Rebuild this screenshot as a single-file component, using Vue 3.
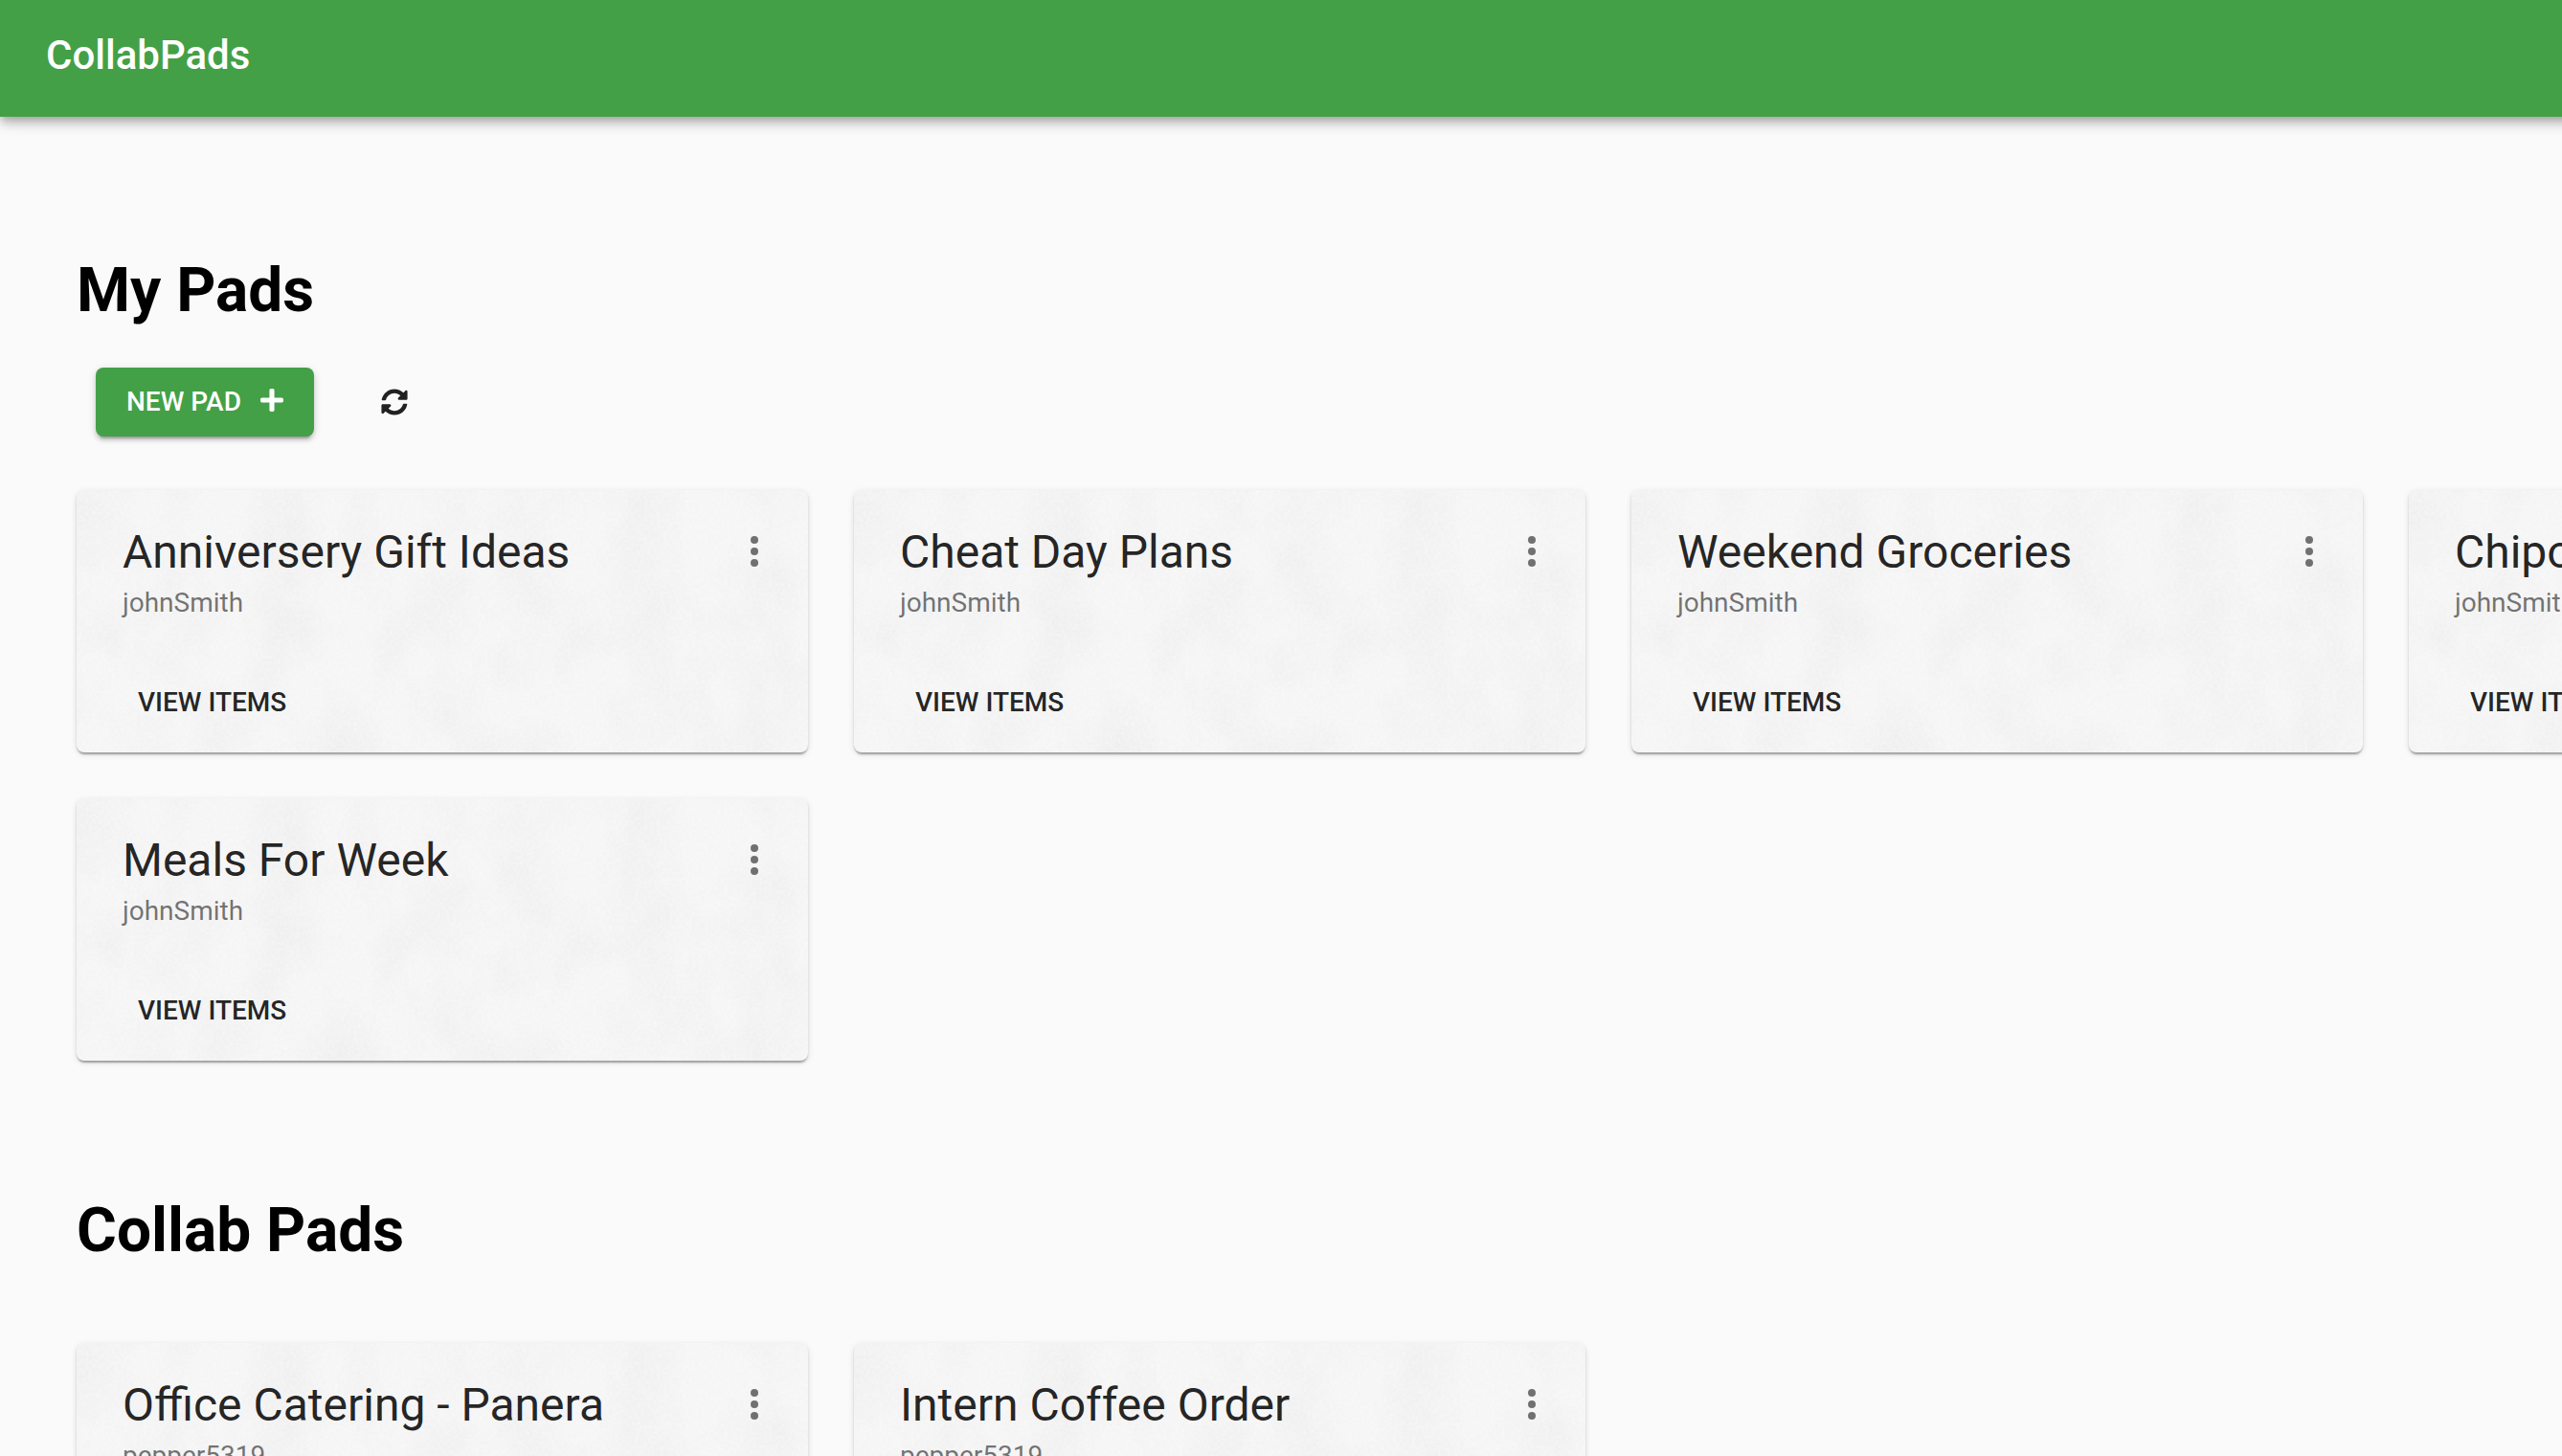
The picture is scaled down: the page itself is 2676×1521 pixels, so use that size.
<script setup>
const myPads = [
  { title: 'Anniversery Gift Ideas', owner: 'johnSmith' },
  { title: 'Cheat Day Plans', owner: 'johnSmith' },
  { title: 'Weekend Groceries', owner: 'johnSmith' },
  { title: 'Chipotle Order', owner: 'johnSmith' },
  { title: 'Meals For Week', owner: 'johnSmith' },
]

const collabPads = [
  { title: 'Office Catering - Panera', owner: 'pepper5319' },
  { title: 'Intern Coffee Order', owner: 'pepper5319' },
]

const sections = [
  { id: 'my-pads', heading: 'My Pads', pads: myPads, actions: true },
  { id: 'collab-pads', heading: 'Collab Pads', pads: collabPads, actions: false },
]
</script>

<template>
  <div class="page">
    <header class="app-bar">
      <span class="brand">CollabPads</span>
    </header>

    <main class="content">
      <section
        v-for="section in sections"
        :key="section.id"
        class="section"
        :aria-labelledby="section.id"
      >
        <h1 :id="section.id" class="heading">{{ section.heading }}</h1>

        <div v-if="section.actions" class="toolbar">
          <button type="button" class="new-pad">
            NEW PAD
            <svg class="plus" viewBox="0 0 448 512" aria-hidden="true">
              <path
                d="M416 208H272V64c0-17.67-14.33-32-32-32h-32c-17.67 0-32 14.33-32 32v144H32c-17.67 0-32 14.33-32 32v32c0 17.67 14.33 32 32 32h144v144c0 17.67 14.33 32 32 32h32c17.67 0 32-14.33 32-32V304h144c17.67 0 32-14.33 32-32v-32c0-17.67-14.33-32-32-32z"
              />
            </svg>
          </button>
          <button type="button" class="refresh" aria-label="Refresh">
            <svg class="sync" viewBox="0 0 512 512" aria-hidden="true">
              <path
                d="M370.72 133.28C339.458 104.008 298.888 87.962 255.848 88c-77.458.068-144.328 53.178-162.791 126.85-1.344 5.363-6.122 9.15-11.651 9.15H24.103c-7.498 0-13.194-6.807-11.807-14.176C33.933 94.924 134.813 8 256 8c66.448 0 126.791 26.136 171.315 68.685L463.03 40.97C478.149 25.851 504 36.559 504 57.941V192c0 13.255-10.745 24-24 24H345.941c-21.382 0-32.09-25.851-16.971-40.971l41.75-41.749zM32 296h134.059c21.382 0 32.09 25.851 16.971 40.971l-41.75 41.75c31.262 29.273 71.835 45.319 114.876 45.28 77.418-.07 144.315-53.144 162.787-126.849 1.344-5.363 6.122-9.15 11.651-9.15h57.304c7.498 0 13.194 6.807 11.807 14.176C478.067 417.076 377.187 504 256 504c-66.448 0-126.791-26.136-171.315-68.685L48.97 471.03C33.851 486.149 8 475.441 8 454.059V320c0-13.255 10.745-24 24-24z"
              />
            </svg>
          </button>
        </div>

        <div class="grid">
          <article v-for="pad in section.pads" :key="pad.title" class="card">
            <div class="card-header">
              <div class="card-text">
                <h2 class="card-title">{{ pad.title }}</h2>
                <p class="card-owner">{{ pad.owner }}</p>
              </div>
              <button type="button" class="more" aria-label="Pad options">
                <svg class="more-icon" viewBox="0 0 24 24" aria-hidden="true">
                  <circle cx="12" cy="6" r="2" />
                  <circle cx="12" cy="12" r="2" />
                  <circle cx="12" cy="18" r="2" />
                </svg>
              </button>
            </div>
            <div class="card-actions">
              <button type="button" class="view">VIEW ITEMS</button>
            </div>
          </article>
        </div>
      </section>
    </main>
  </div>
</template>

<style>
body {
  margin: 0;
  background: #fafafa;
}
</style>

<style scoped>
.page {
  height: 100vh;
  overflow: hidden;
  background: #fafafa;
  font-family: Roboto, "Liberation Sans", sans-serif;
  color: rgba(0, 0, 0, 0.87);
}

button {
  margin: 0;
  border: 0;
  background: transparent;
  font-family: inherit;
  color: inherit;
  cursor: pointer;
}

svg {
  display: block;
  fill: currentColor;
}

.app-bar {
  position: relative;
  margin-right: -24px;
  padding: 26px 48px 32px;
  background: #43a047;
  color: #fff;
  box-shadow:
    0 4px 8px -2px rgba(0, 0, 0, 0.2),
    0 8px 10px 0 rgba(0, 0, 0, 0.14),
    0 2px 20px 0 rgba(0, 0, 0, 0.12);
}

.brand {
  display: block;
  font-size: 42px;
  font-weight: 500;
  line-height: 64px;
}

.content {
  display: flex;
  flex-direction: column;
  gap: 139px;
  padding: 143px 80px 80px;
}

.heading {
  margin: 0 0 78px;
  font-size: 64px;
  font-weight: 700;
  line-height: 78px;
  color: #000;
}

.heading:has(+ .toolbar) {
  margin-bottom: 41px;
}

.toolbar {
  display: flex;
  align-items: center;
  gap: 48px;
  margin-bottom: 56px;
  padding-left: 20px;
}

.new-pad {
  display: flex;
  align-items: center;
  gap: 20px;
  padding: 12px 32px;
  border-radius: 8px;
  background: #43a047;
  color: #fff;
  font-size: 28px;
  font-weight: 500;
  line-height: 48px;
  box-shadow:
    0 6px 2px -4px rgba(0, 0, 0, 0.2),
    0 4px 4px 0 rgba(0, 0, 0, 0.14),
    0 2px 10px 0 rgba(0, 0, 0, 0.12);
}

.plus {
  width: 24px;
  height: 28px;
  margin-bottom: 4px;
}

.refresh {
  padding: 22px;
}

.sync {
  width: 28px;
  height: 28px;
}

.grid {
  display: grid;
  grid-template-columns: repeat(4, 764px);
  gap: 48px;
}

.card {
  border-radius: 8px;
  background-color: #f5f5f5;
  background-image: url("data:image/svg+xml,%3Csvg xmlns='http://www.w3.org/2000/svg' width='764' height='274'%3E%3Cfilter id='b' x='0' y='0' width='100%25' height='100%25' color-interpolation-filters='sRGB'%3E%3CfeTurbulence type='fractalNoise' baseFrequency='.016 .012' numOctaves='4' seed='4'/%3E%3CfeColorMatrix values='0 0 0 0 0 0 0 0 0 0 0 0 0 0 0 .05 0 0 0 -.018'/%3E%3C/filter%3E%3Cfilter id='g' x='0' y='0' width='100%25' height='100%25' color-interpolation-filters='sRGB'%3E%3CfeTurbulence type='fractalNoise' baseFrequency='.3' numOctaves='2' seed='9'/%3E%3CfeColorMatrix values='0 0 0 0 1 0 0 0 0 1 0 0 0 0 1 .6 0 0 0 -.2'/%3E%3C/filter%3E%3Crect width='764' height='274' filter='url(%23b)'/%3E%3Crect width='764' height='274' filter='url(%23g)'/%3E%3C/svg%3E");
  box-shadow:
    0 4px 2px -2px rgba(0, 0, 0, 0.2),
    0 2px 2px 0 rgba(0, 0, 0, 0.14),
    0 2px 6px 0 rgba(0, 0, 0, 0.12);
}

.card-header {
  display: flex;
  align-items: flex-start;
  padding: 16px 8px 30px 48px;
}

.card-text {
  flex: 1;
  min-width: 0;
  padding-top: 17px;
}

.card-title {
  margin: 0;
  font-size: 48px;
  font-weight: 400;
  line-height: 64px;
}

.card-owner {
  margin: 0;
  font-size: 28px;
  line-height: 42px;
  color: rgba(0, 0, 0, 0.54);
}

.more {
  padding: 24px;
  color: rgba(0, 0, 0, 0.54);
}

.more-icon {
  width: 48px;
  height: 48px;
}

.card-actions {
  display: flex;
  padding: 17px 48px 16px;
}

.view {
  padding: 12px 16px;
  border-radius: 8px;
  font-size: 28px;
  font-weight: 500;
  line-height: 48px;
}
</style>
